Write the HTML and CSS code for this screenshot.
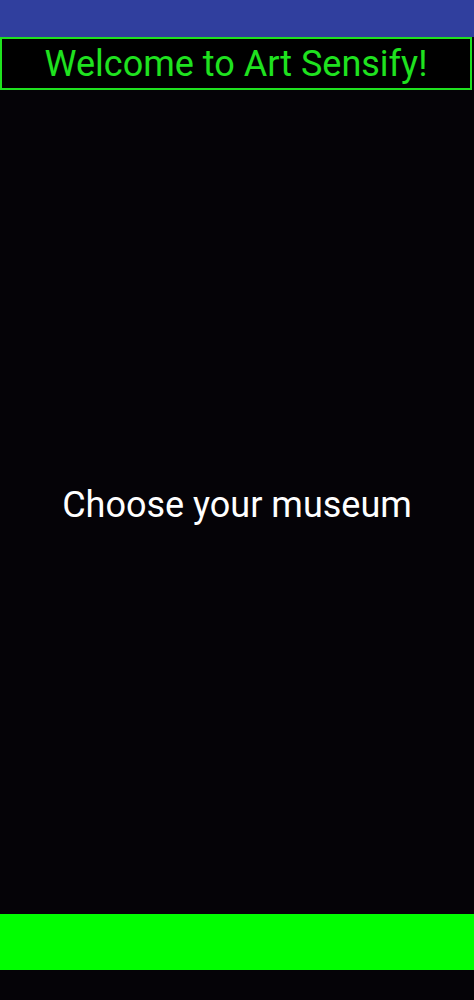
FILE: index.html
```html
<!DOCTYPE html>
<html lang="en">
<head>
<meta charset="utf-8">
<title>Art Sensify</title>
<link rel="stylesheet" href="styles.css">
</head>
<body>
<div class="screen">
  <div class="status-bar"></div>
  <header class="welcome">Welcome to Art Sensify!</header>
  <main class="card">
    <p class="prompt">Choose your museum</p>
  </main>
  <div class="action-bar"></div>
  <div class="nav-bar"></div>
</div>
</body>
</html>
```
FILE: styles.css
```css
html, body {
  margin: 0;
  padding: 0;
  background: #050307;
}
.screen {
  width: 474px;
  height: 1000px;
  display: flex;
  flex-direction: column;
  font-family: Roboto, "Liberation Sans", sans-serif;
  background: #050307;
}
.status-bar {
  height: 37px;
  background: #303f9e;
  flex: none;
}
.welcome {
  flex: none;
  height: 49px;
  margin-right: 2px;
  border: 2px solid #1fe21f;
  background: #000;
  color: #1fe21f;
  font-size: 36px;
  line-height: 51px;
  text-align: center;
}
.card {
  flex: 1;
  background: #050307;
  border-radius: 0 0 4px 4px;
  display: flex;
  align-items: center;
  justify-content: center;
  padding-top: 6px;
}
.prompt {
  margin: 0;
  color: #fff;
  font-size: 36px;
}
.action-bar {
  flex: none;
  height: 56px;
  background: #00ff00;
}
.nav-bar {
  flex: none;
  height: 30px;
  background: #050307;
}
```
